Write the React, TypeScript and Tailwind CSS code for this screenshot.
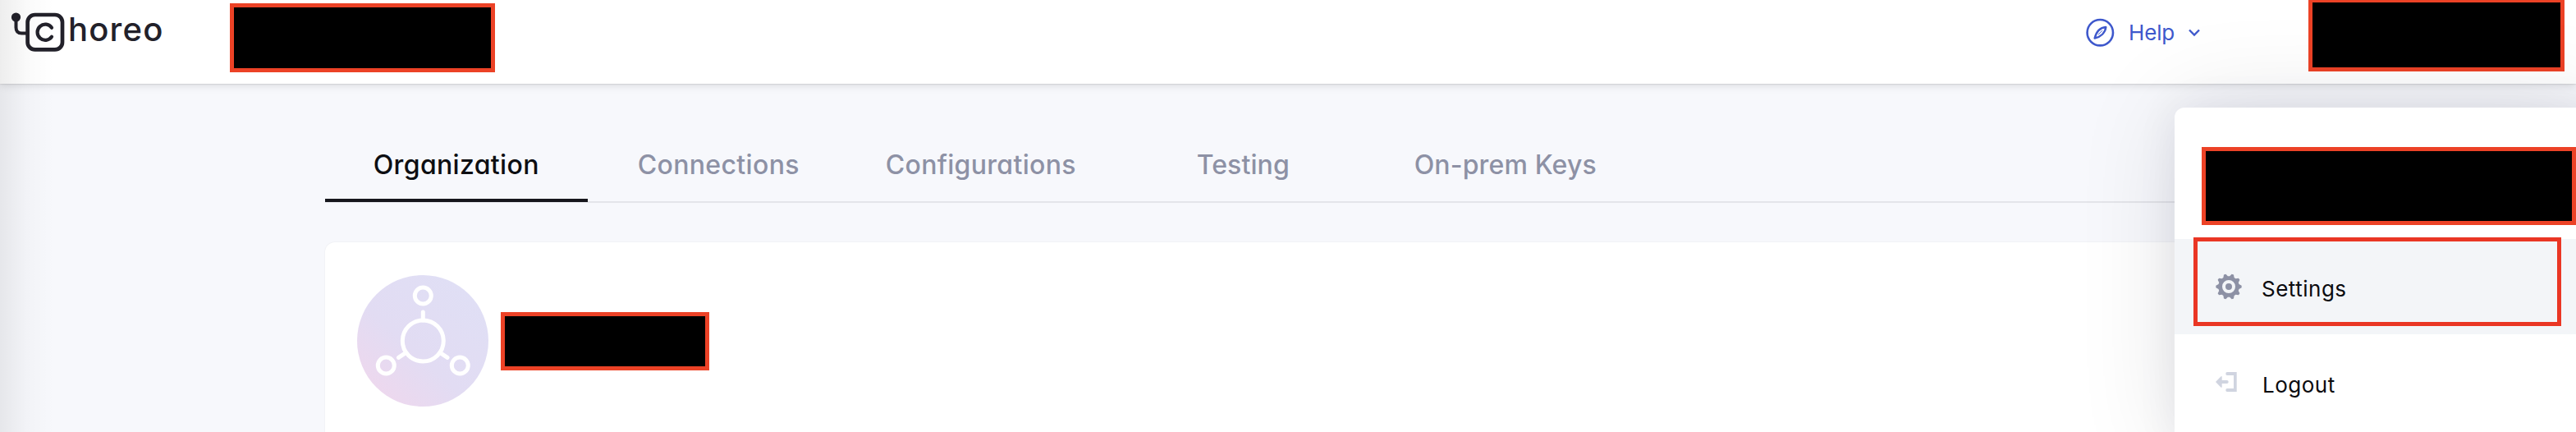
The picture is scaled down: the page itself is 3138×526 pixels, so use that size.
import React from "react";

const tabs = [
  { label: "Organization", tracking: "tracking-[0.35px]", active: true },
  { label: "Connections", tracking: "tracking-[0.35px]" },
  { label: "Configurations", tracking: "tracking-[0.3px]" },
  { label: "Testing", tracking: "tracking-[0.1px]" },
  { label: "On-prem Keys", tracking: "tracking-[0.15px]" },
];

function Logo() {
  return (
    <div className="flex w-[280px] items-start pl-[13px] pt-[14px] text-[#22212a]">
      <svg width="68" height="50" viewBox="0 0 68 50" fill="none" stroke="#22212a" className="shrink-0">
        <circle cx="6.500" cy="7" r="5.600" fill="#22212a" stroke="none" />
        <path d="M6.500 7v12.500q0 7 7 7h6" strokeWidth="4" />
        <rect x="20.600" y="4" width="42.400" height="42.400" rx="9" strokeWidth="4.700" />
        <path d="M50 19.700A9.600 9.600 0 1 0 50 30.800" strokeWidth="4.200" strokeLinecap="round" />
      </svg>
      <span className="ml-[2px] -mt-[2px] text-[40px] font-medium leading-[48px] tracking-[1.2px]">horeo</span>
    </div>
  );
}

function Redacted({ className }: { className: string }) {
  return <div className={`shrink-0 border-[5px] border-[#ec4226] bg-black ${className}`} />;
}

function HelpMenu() {
  return (
    <button className="ml-auto mr-[132px] mt-[20px] flex h-[40px] items-center text-[26px] leading-[40px] text-[#3e58cc]">
      <svg width="36" height="36" viewBox="0 0 36 36" fill="none" stroke="currentColor" strokeWidth="2.600">
        <circle cx="17.300" cy="17.700" r="15.700" />
        <path d="M24.300 11c-6 .5-11.500 5-13.600 13.600 7.500-2 13-7 13.600-13.600Z" strokeWidth="2.500" strokeLinejoin="round" />
        <path d="M15 20.200l5-5" strokeWidth="1" />
      </svg>
      <span className="ml-[16px] tracking-[-0.2px]">Help</span>
      <svg width="14" height="10" viewBox="0 0 14 10" fill="none" stroke="currentColor" strokeWidth="2.300" className="ml-[17px]">
        <path d="M1 1.500l6 6 6-6" />
      </svg>
    </button>
  );
}

function OrgIcon() {
  return (
    <svg width="160" height="160" viewBox="0 0 160 160" fill="none" className="shrink-0">
      <defs>
        <linearGradient id="org" x1="0.15" y1="0.88" x2="0.85" y2="0.12">
          <stop offset="0" stopColor="#edd8ee" />
          <stop offset="0.4" stopColor="#e2dcf3" />
          <stop offset="1" stopColor="#e0dff5" />
        </linearGradient>
      </defs>
      <circle cx="80" cy="80" r="80" fill="url(#org)" />
      <g stroke="#fff" strokeWidth="5" strokeLinecap="round">
        <circle cx="80.300" cy="80" r="25" />
        <circle cx="80.300" cy="25" r="10" />
        <circle cx="35.300" cy="110" r="10" />
        <circle cx="125.300" cy="110" r="10" />
        <path d="M80.300 45v10M50.500 100.300l9-6M110 100.300l-9-6" />
      </g>
    </svg>
  );
}

function GearIcon() {
  const points = Array.from({ length: 10 }, (_, i) => i * 36)
    .flatMap((deg) =>
      [
        [-13, 12.8],
        [-4.5, 15.7],
        [4.5, 15.7],
        [13, 12.8],
      ].map(([off, r]) => {
        const a = ((deg + off) * Math.PI) / 180;
        return `${(16 + r * Math.cos(a)).toFixed(2)},${(16 + r * Math.sin(a)).toFixed(2)}`;
      })
    )
    .join(" ");
  return (
    <svg width="32" height="32" viewBox="0 0 32 32">
      <polygon points={points} fill="#8d91a5" />
      <circle cx="16" cy="16" r="6" fill="none" stroke="#f3f5f8" strokeWidth="4" />
    </svg>
  );
}

function LogoutIcon() {
  return (
    <svg width="26" height="24" viewBox="0 0 26 24" fill="#d0d4e0">
      <path d="M0 12l6.300-6.600q1.400-1 1.400.8v3.800h6q2 0 2 2t-2 2h-6v3.800q0 1.800-1.400.8z" />
      <path d="M14 0h11.700v24H14q-1.700-.2-1.700-2t1.700-2h8V4h-8q-1.700-.2-1.700-2T14 0z" />
    </svg>
  );
}

export default function App() {
  return (
    <div className="relative h-[526px] w-[3138px] overflow-hidden bg-[#f7f8fc] font-['Inter',sans-serif] [font-feature-settings:'cv11']">
      <header className="relative flex h-[102px] items-start bg-white shadow-[0_0_2px_rgba(0,0,0,0.22),0_2px_10px_rgba(0,0,0,0.12)]">
        <Logo />
        <Redacted className="mt-[4px] h-[84px] w-[323px]" />
        <HelpMenu />
        <Redacted className="mr-[14px] mt-[-2px] h-[89px] w-[312px]" />
      </header>

      <main className="ml-[396px]">
        <nav className="flex h-[145px] items-end border-b-2 border-[#e4e5ea]">
          {tabs.map((t) => (
            <div
              key={t.label}
              className={`-mb-px flex h-[93px] w-[319.5px] justify-center border-b-4 pt-[24px] text-[32px] font-medium leading-[48px] ${t.tracking} ${
                t.active ? "border-[#16161c] text-[#0d0e12]" : "border-transparent text-[#8d91a5]"
              }`}
            >
              <span>{t.label}</span>
            </div>
          ))}
        </nav>
        <section className="mt-[48px] flex h-[260px] items-start rounded-tl-xl bg-white pl-[39px] pt-[40px] shadow-[0_0_2px_rgba(0,0,0,0.08)]">
          <OrgIcon />
          <Redacted className="ml-[15px] mt-[45px] h-[71px] w-[254px]" />
        </section>
      </main>

      <div className="pointer-events-none absolute inset-y-0 left-0 w-[66px] bg-linear-to-r from-black/7 via-black/2 to-transparent" />

      <aside className="absolute left-[2649px] top-[131px] h-[412px] w-[520px] rounded-xl bg-white shadow-[0_0_125px_rgba(20,20,40,0.11),0_0_50px_rgba(20,20,40,0.07)]">
        <div className="h-[160px] pl-[33px] pt-[48px]">
          <Redacted className="h-[95px] w-[456px]" />
        </div>
        <div className="relative flex h-[116px] items-center bg-[#f3f5f8] pl-[50px]">
          <GearIcon />
          <span className="ml-[24px] mt-[6px] text-[26px] leading-[40px] tracking-[0.5px] text-[#0b0b0f]">Settings</span>
          <div className="absolute -top-[2px] left-[23px] h-[108px] w-[448px] border-[5px] border-[#ea3624]" />
        </div>
        <div className="flex h-[116px] items-center pl-[50px]">
          <LogoutIcon />
          <span className="ml-[31px] mt-[7px] text-[26px] leading-[40px] tracking-[0.5px] text-[#0b0b0f]">Logout</span>
        </div>
      </aside>
    </div>
  );
}
